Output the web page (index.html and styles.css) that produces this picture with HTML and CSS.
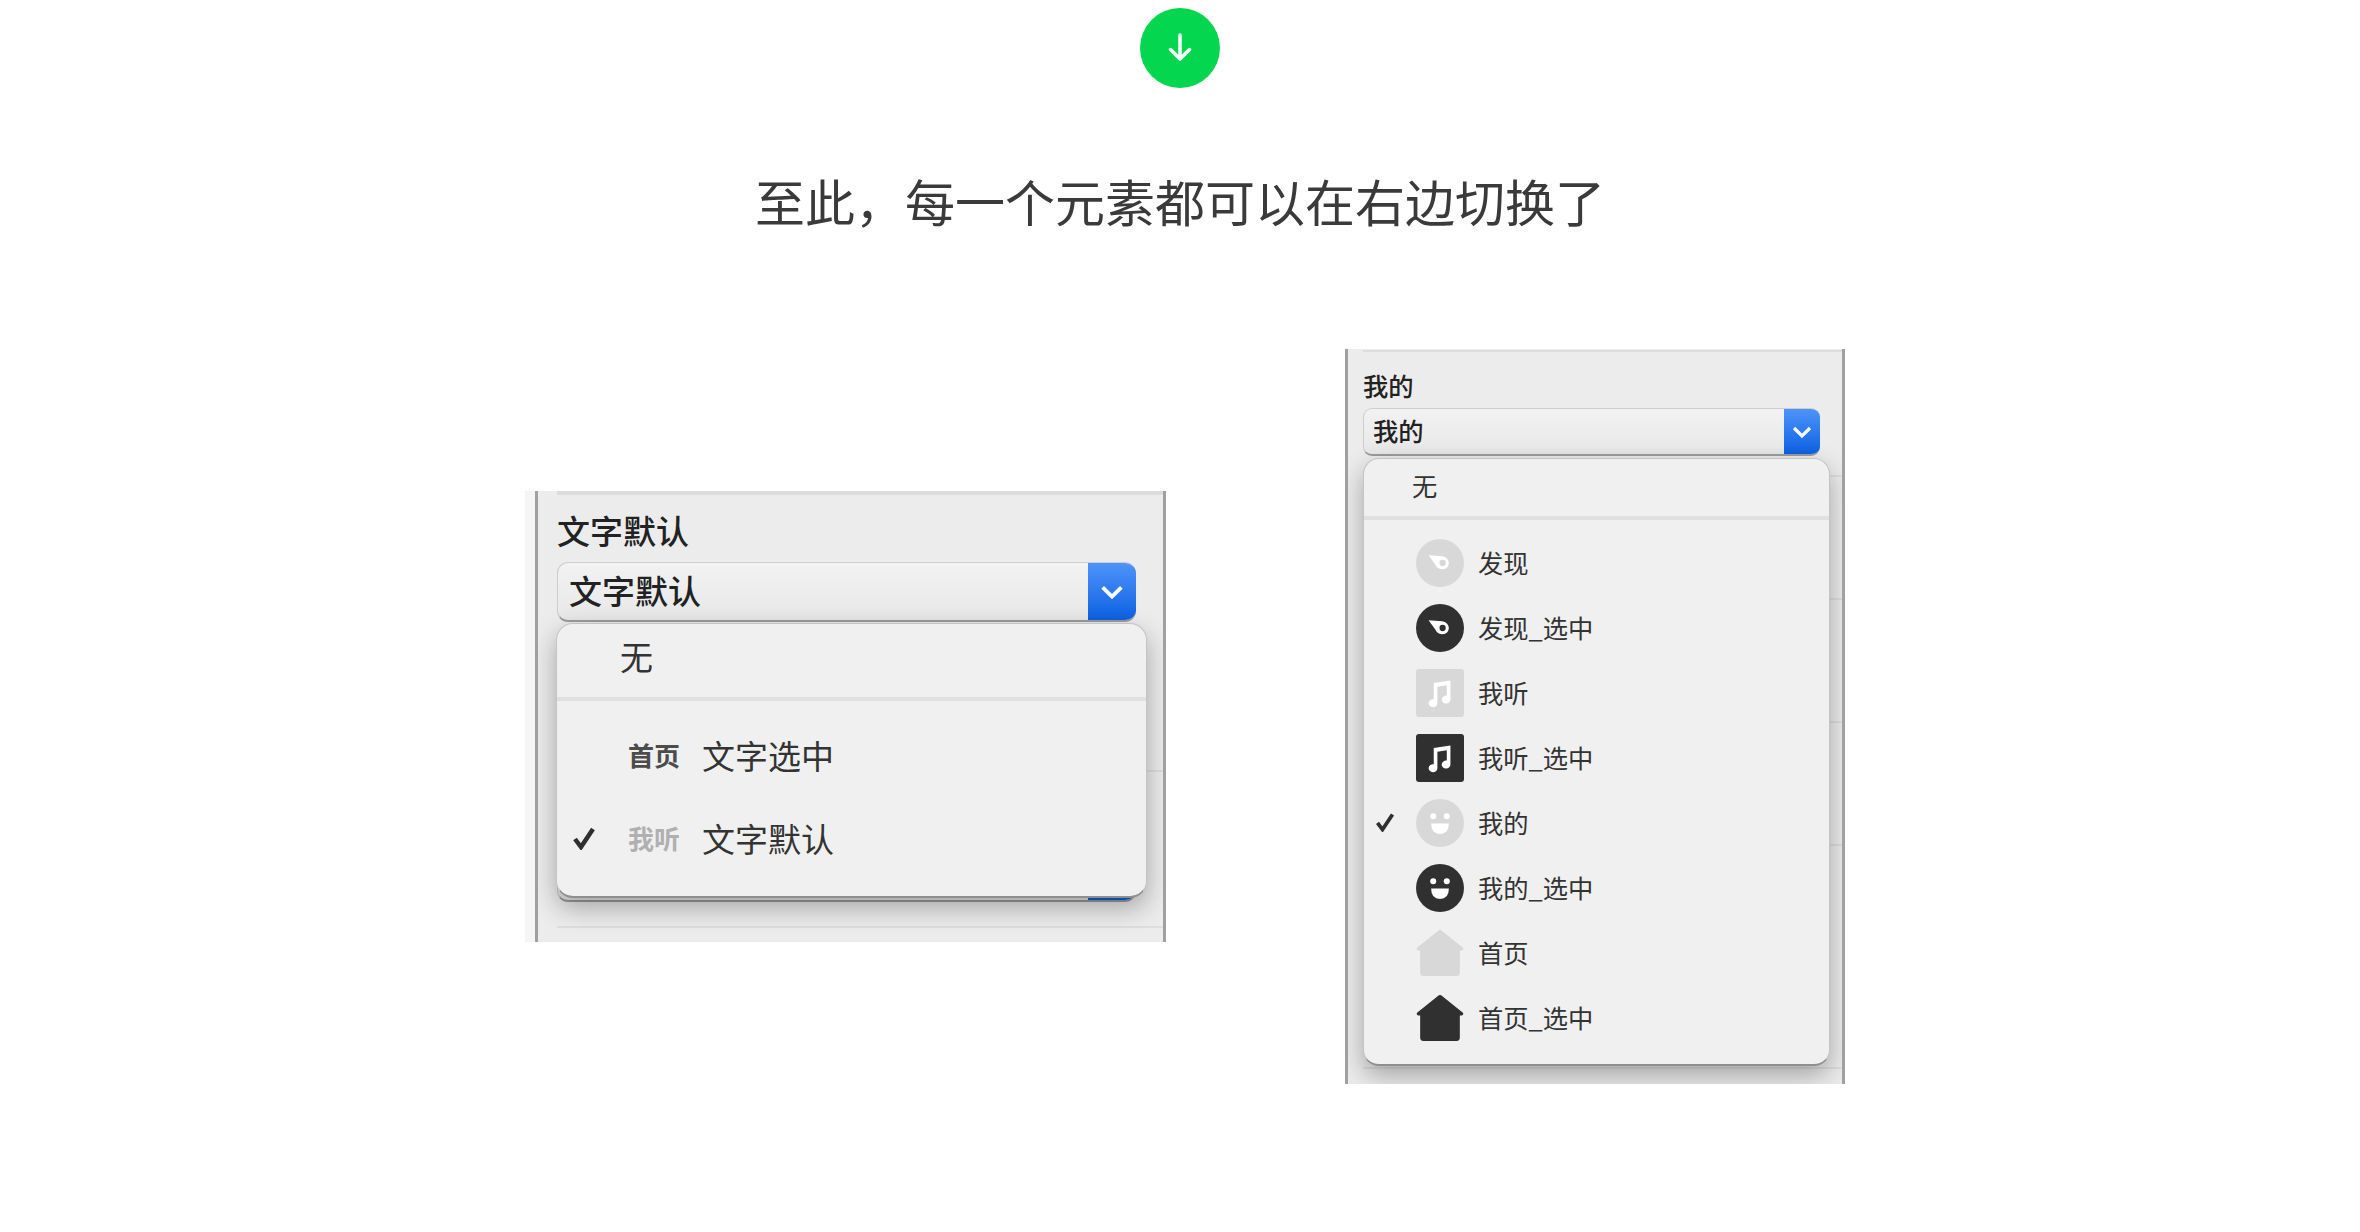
FILE: index.html
```html
<!DOCTYPE html>
<html lang="zh-CN">
  <head>
    <meta charset="UTF-8" />
    <title>切换元素</title>
    <link rel="stylesheet" href="styles.css">
  </head>
  <body>
    <svg class="defs" width="0" height="0">
      <symbol id="i-compass" viewBox="0 0 46 46">
        <path class="glyph" d="M12 15.5 L25 16.5 Q31 17.5 31.5 23 Q31 28.5 25.5 29 Q20.5 29 18.5 24.5 Z" />
        <circle class="ground" cx="25.5" cy="23" r="3" />
      </symbol>
      <symbol id="i-note" viewBox="0 0 46 46">
        <path class="glyph" d="M17 13.5 L33 11 V29 A4.2 3.8 0 1 1 29.5 25.5 V15.5 L20.5 17 V32.5 A4.2 3.8 0 1 1 17 29 Z" />
      </symbol>
      <symbol id="i-face" viewBox="0 0 46 46">
        <circle class="glyph" cx="16.5" cy="16.5" r="2.9" />
        <circle class="glyph" cx="29.5" cy="16.5" r="2.9" />
        <path class="glyph" d="M14.5 23.5 H31.5 Q31.5 33.5 23 33.5 Q14.5 33.5 14.5 23.5 Z" />
      </symbol>
    </svg>

    <div class="arrow">
      <svg width="32" height="32" viewBox="0 0 32 32">
        <path d="M16 3 V27 M6.5 17.5 L16 27 L25.5 17.5" />
      </svg>
    </div>

    <h1 class="title">至此，每一个元素都可以在右边切换了</h1>

    <div class="shots">
      <section class="shot shot-text">
        <div class="panel">
          <div class="field-label">文字默认</div>
          <div class="select">
            <span class="select-value">文字默认</span>
            <span class="select-btn">
              <svg width="28" height="28" viewBox="0 0 24 24"><path d="M4 8 L12 16 L20 8" /></svg>
            </span>
          </div>
          <div class="rule"></div>
          <div class="select select-under"><span class="select-btn"></span></div>
          <div class="rule rule-last"></div>

          <div class="menu">
            <div class="menu-none">无</div>
            <ul class="menu-list">
              <li class="row">
                <span></span>
                <span class="tag">首页</span>
                <span>文字选中</span>
              </li>
              <li class="row">
                <svg class="check" viewBox="0 0 24 24"><path d="M3 13 L9 21 L21 3" /></svg>
                <span class="tag tag-off">我听</span>
                <span>文字默认</span>
              </li>
            </ul>
          </div>
        </div>
      </section>

      <section class="shot shot-icons">
        <div class="panel">
          <div class="field-label">我的</div>
          <div class="select">
            <span class="select-value">我的</span>
            <span class="select-btn">
              <svg width="24" height="24" viewBox="0 0 24 24"><path d="M4 8 L12 16 L20 8" /></svg>
            </span>
          </div>
          <div class="rule"></div>
          <div class="rule"></div>
          <div class="rule"></div>
          <div class="rule"></div>
          <div class="rule rule-last"></div>

          <div class="menu">
            <div class="menu-none">无</div>
            <ul class="menu-list">
              <li class="row">
                <span></span>
                <svg class="icon round off"><use href="#i-compass" /></svg>
                <span>发现</span>
              </li>
              <li class="row">
                <span></span>
                <svg class="icon round on"><use href="#i-compass" /></svg>
                <span>发现_选中</span>
              </li>
              <li class="row">
                <span></span>
                <svg class="icon square off"><use href="#i-note" /></svg>
                <span>我听</span>
              </li>
              <li class="row">
                <span></span>
                <svg class="icon square on"><use href="#i-note" /></svg>
                <span>我听_选中</span>
              </li>
              <li class="row">
                <svg class="check" viewBox="0 0 24 24"><path d="M3 13 L9 21 L21 3" /></svg>
                <svg class="icon round off"><use href="#i-face" /></svg>
                <span>我的</span>
              </li>
              <li class="row">
                <span></span>
                <svg class="icon round on"><use href="#i-face" /></svg>
                <span>我的_选中</span>
              </li>
              <li class="row">
                <span></span>
                <svg class="house off" viewBox="0 0 46 46"><path d="M23 1 Q24 1 25 2 L45 18 Q46 20 44 20.5 H42 V42 Q42 45 39 45 H7 Q4 45 4 42 V20.5 H2 Q0 20 1 18 L21 2 Q22 1 23 1 Z" /></svg>
                <span>首页</span>
              </li>
              <li class="row">
                <span></span>
                <svg class="house on" viewBox="0 0 46 46"><path d="M23 1 Q24 1 25 2 L45 18 Q46 20 44 20.5 H42 V42 Q42 45 39 45 H7 Q4 45 4 42 V20.5 H2 Q0 20 1 18 L21 2 Q22 1 23 1 Z" /></svg>
                <span>首页_选中</span>
              </li>
            </ul>
          </div>
        </div>
      </section>
    </div>
  </body>
</html>
```

FILE: styles.css
```css
* {
  box-sizing: border-box;
}

body {
  margin: 0;
  background: #fff;
  color: #333;
  font-family: "Noto Sans CJK SC", "Liberation Sans", sans-serif;
  display: flex;
  flex-direction: column;
  align-items: center;
  min-height: 100vh;
}

.defs {
  position: absolute;
}

.arrow {
  width: 80px;
  height: 80px;
  margin-top: 8px;
  border-radius: 50%;
  background: #05d64f;
  display: flex;
  align-items: center;
  justify-content: center;
}

.arrow path {
  fill: none;
  stroke: #fff;
  stroke-width: 3.5;
  stroke-linecap: round;
  stroke-linejoin: round;
}

.title {
  margin: 77px 0 0;
  font-size: 50px;
  font-weight: 400;
  line-height: 70px;
  color: #3a3a3a;
}

.shots {
  margin-top: 114px;
  padding-left: 10px;
  display: flex;
  align-items: center;
  justify-content: center;
  gap: 179px;
}

/* screenshots */
.shot-text {
  width: 641px;
  height: 451px;
  padding-left: 10px;
  background: #f5f5f5;
}

.shot-icons {
  width: 500px;
  height: 735px;
}

.panel {
  position: relative;
  height: 100%;
  background: #ececec;
  border-left: 3px solid #a0a0a0;
  border-right: 3px solid #a0a0a0;
  overflow: hidden;
}

.shot-text .panel {
  padding: 0 0 0 19px;
  background: linear-gradient(#dcdcdc, #dcdcdc) 19px 0 / 100% 4px no-repeat, #ececec;
}

.shot-icons .panel {
  padding: 0 0 0 15px;
  background: linear-gradient(#dcdcdc, #dcdcdc) 15px 1px / 100% 2px no-repeat, #ececec;
}

.field-label {
  color: #222;
  font-weight: 500;
}

.shot-text .field-label {
  padding-top: 15px;
  font-size: 33px;
  line-height: 48px;
}

.shot-icons .field-label {
  padding-top: 20px;
  font-size: 25.3px;
  line-height: 32px;
}

.select {
  display: flex;
  align-items: stretch;
  justify-content: space-between;
  background: linear-gradient(#f2f2f2, #e8e8e8);
  border: 1px solid #cdcdcd;
  border-bottom: 2px solid #9c9c9c;
  border-right: 0;
  color: #222;
  font-weight: 500;
  overflow: hidden;
}

.shot-text .select {
  width: 579px;
  height: 60px;
  margin-top: 8px;
  border-radius: 11px;
  font-size: 33px;
  line-height: 54px;
}

.shot-icons .select {
  width: 457px;
  height: 48px;
  margin-top: 7px;
  border-radius: 9px;
  font-size: 25.3px;
  line-height: 42px;
}

.select-value {
  padding-left: 11px;
}

.shot-icons .select-value {
  padding-left: 9px;
}

.select-btn {
  background: linear-gradient(#4f94fb, #0b5fe2);
  margin: -1px 0 -2px;
  display: flex;
  align-items: center;
  justify-content: center;
}

.shot-text .select-btn {
  width: 48px;
}

.shot-icons .select-btn {
  width: 36px;
}

.select-btn path {
  fill: none;
  stroke: #fff;
  stroke-width: 3.2;
}

.select-under {
  margin-top: 70px !important;
}

.select-under .select-btn {
  margin-left: auto;
}

.rule {
  border-bottom: 2px solid #dedede;
}

.shot-text .rule {
  height: 150px;
}

.shot-text .rule-last {
  height: 26px;
}

.shot-icons .rule {
  height: 123px;
}

.shot-icons .rule:nth-of-type(3) {
  height: 21px;
}

.shot-icons .rule-last {
  height: 223px;
}

/* popup menu */
.menu {
  position: absolute;
  background: #f0f0f0;
  border: 1px solid #c4c4c4;
  border-bottom: 2px solid #8f8f8f;
  box-shadow: 0 10px 26px rgba(0, 0, 0, 0.3);
  color: #333;
}

.shot-text .menu {
  left: 18px;
  top: 132px;
  width: 591px;
  height: 275px;
  border-radius: 17px;
  font-size: 33px;
}

.shot-icons .menu {
  left: 15px;
  top: 109px;
  width: 467px;
  height: 608px;
  border-radius: 16px;
  font-size: 25.3px;
}

.menu-none {
  border-bottom: 4px solid #e0e0e0;
}

.shot-text .menu-none {
  height: 77px;
  padding-left: 63px;
  line-height: 65px;
}

.shot-icons .menu-none {
  height: 61px;
  padding-left: 48px;
  line-height: 52px;
}

.menu-list {
  list-style: none;
  margin: 0;
}

.shot-text .menu-list {
  padding: 12px 0 0 15px;
}

.shot-icons .menu-list {
  padding: 9px 0 0 11px;
}

.row {
  display: grid;
  align-items: center;
}

.shot-text .row {
  grid-template-columns: 56px 74px 1fr;
  height: 83px;
}

.shot-icons .row {
  grid-template-columns: 41px 62px 1fr;
  height: 65px;
}

.check {
  fill: none;
  stroke: #2f2f2f;
  stroke-width: 4.5;
}

.shot-text .check {
  width: 24px;
  height: 24px;
}

.shot-icons .check {
  width: 20px;
  height: 20px;
}

.tag {
  font-size: 26px;
  font-weight: 700;
  color: #4c4c4c;
}

.tag-off {
  color: #b0b0b0;
}

/* icons */
.icon {
  width: 48px;
  height: 48px;
  margin-top: 2px;
  display: block;
}

.round {
  border-radius: 50%;
}

.square {
  border-radius: 3px;
}

.off {
  --mark: #fff;
  --base: #d8d8d8;
}

.on {
  --mark: #fff;
  --base: #303030;
}

.icon.off,
.icon.on {
  background: var(--base);
}

.glyph {
  fill: var(--mark);
}

.ground {
  fill: var(--base);
}

.house {
  width: 48px;
  height: 48px;
  margin-top: 2px;
  display: block;
  fill: var(--base);
}
```
